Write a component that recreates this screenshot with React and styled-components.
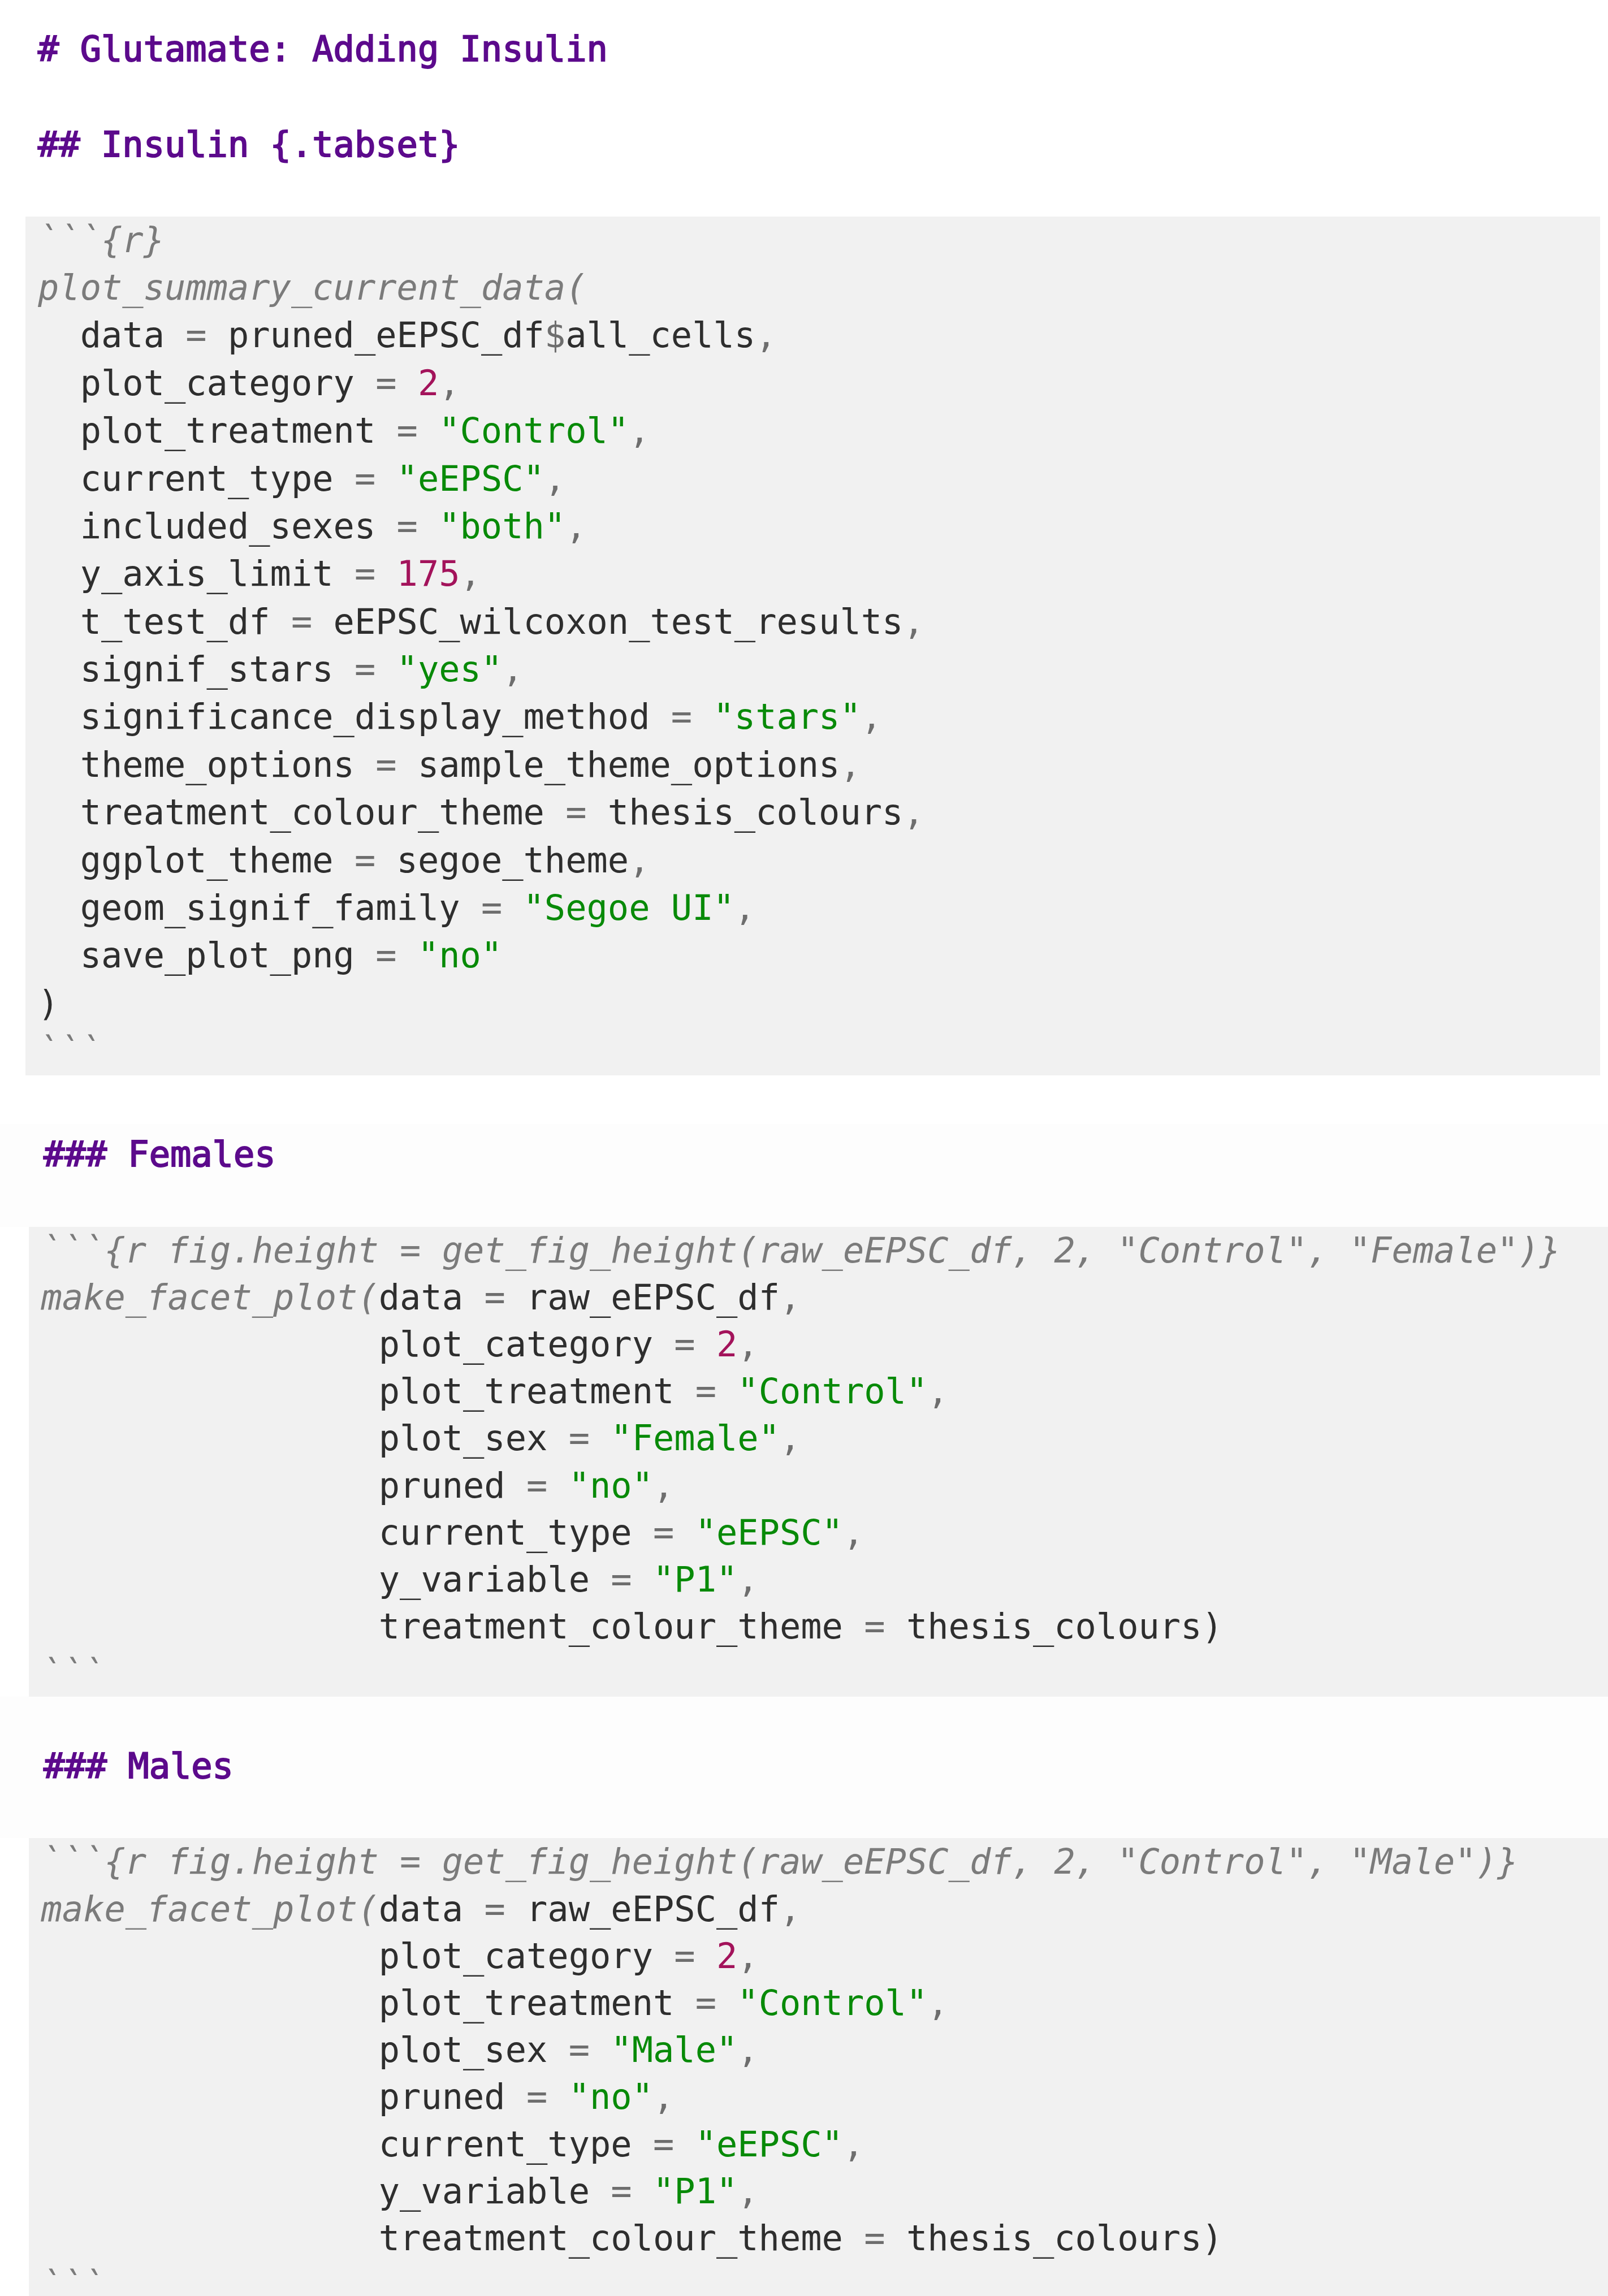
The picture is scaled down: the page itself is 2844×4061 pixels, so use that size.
import React from "react";
import styled, { createGlobalStyle } from "styled-components";

const Global = createGlobalStyle`
  html, body { margin: 0; padding: 0; background: #ffffff; }
  body { font-family: "DejaVu Sans Mono", "Liberation Mono", monospace; }
`;

const MONO = `"DejaVu Sans Mono", "Liberation Mono", monospace`;

const Page = styled.div`
  width: 2844px;
  height: 4061px;
  overflow: hidden;
  display: flex;
  flex-direction: column;
  background: #ffffff;
  font-family: ${MONO};
  font-size: 62px;
`;

const TopSection = styled.section`
  display: flex;
  flex-direction: column;
  padding-top: 45px;
`;

const Line = styled.div`
  white-space: pre;
  height: ${(p) => p.$lh}px;
  line-height: ${(p) => p.$lh}px;
  color: #2e2e2e;
`;

const Heading = styled(Line)`
  color: #5c0a8c;
  font-weight: 400;
  -webkit-text-stroke: 2px #5c0a8c;
  padding-left: ${(p) => p.$indent}px;
`;

const Band = styled.div`
  flex: none;
  display: flex;
  flex-direction: column;
  background: #fdfdfd;
  height: ${(p) => p.$h}px;
  padding-top: ${(p) => p.$pt}px;
  box-sizing: border-box;
`;

const Spacer = styled.div`
  height: ${(p) => p.$h}px;
  flex: none;
`;

const CodeBlock = styled.div`
  flex: none;
  display: flex;
  flex-direction: column;
  background: #f1f1f1;
  margin-left: ${(p) => p.$left}px;
  margin-right: ${(p) => p.$right}px;
  padding-left: ${(p) => p.$pad}px;
`;

const Chunk = styled.span`
  color: #7b7b7b;
  font-style: italic;
`;
const Op = styled.span`
  color: #6e6e6e;
`;
const Str = styled.span`
  color: #088a08;
`;
const Num = styled.span`
  color: #a3135b;
`;
const Txt = styled.span`
  color: #2e2e2e;
`;

const TOKEN = { c: Chunk, f: Chunk, o: Op, s: Str, n: Num, t: Txt };

const arg = (indent, name, value, type, last) => {
  const toks = [["t", " ".repeat(indent) + name + " "], ["o", "="], ["t", " "]];
  if (Array.isArray(value)) toks.push(...value);
  else toks.push([type, value]);
  if (last === ")") toks.push(["t", ")"]);
  else if (last !== "none") toks.push(["o", ","]);
  return toks;
};

const block1 = [
  [["c", "```{r}"]],
  [["f", "plot_summary_current_data("]],
  arg(2, "data", [["t", "pruned_eEPSC_df"], ["o", "$"], ["t", "all_cells"]]),
  arg(2, "plot_category", "2", "n"),
  arg(2, "plot_treatment", '"Control"', "s"),
  arg(2, "current_type", '"eEPSC"', "s"),
  arg(2, "included_sexes", '"both"', "s"),
  arg(2, "y_axis_limit", "175", "n"),
  arg(2, "t_test_df", "eEPSC_wilcoxon_test_results", "t"),
  arg(2, "signif_stars", '"yes"', "s"),
  arg(2, "significance_display_method", '"stars"', "s"),
  arg(2, "theme_options", "sample_theme_options", "t"),
  arg(2, "treatment_colour_theme", "thesis_colours", "t"),
  arg(2, "ggplot_theme", "segoe_theme", "t"),
  arg(2, "geom_signif_family", '"Segoe UI"', "s"),
  arg(2, "save_plot_png", '"no"', "s", "none"),
  [["t", ")"]],
  [["c", "```"]],
];

const facetBlock = (sex) => [
  [["c", `\`\`\`{r fig.height = get_fig_height(raw_eEPSC_df, 2, "Control", "${sex}")}`]],
  [["f", "make_facet_plot("], ["t", "data "], ["o", "="], ["t", " raw_eEPSC_df"], ["o", ","]],
  arg(16, "plot_category", "2", "n"),
  arg(16, "plot_treatment", '"Control"', "s"),
  arg(16, "plot_sex", `"${sex}"`, "s"),
  arg(16, "pruned", '"no"', "s"),
  arg(16, "current_type", '"eEPSC"', "s"),
  arg(16, "y_variable", '"P1"', "s"),
  arg(16, "treatment_colour_theme", "thesis_colours", "t", ")"),
  [["c", "```"]],
];

function Code({ lines, lh, left, right, pad }) {
  return (
    <CodeBlock $left={left} $right={right} $pad={pad}>
      {lines.map((toks, i) => (
        <Line key={i} $lh={lh}>
          {toks.map(([type, text], j) => {
            const T = TOKEN[type];
            return <T key={j}>{text}</T>;
          })}
        </Line>
      ))}
    </CodeBlock>
  );
}

export default function App() {
  return (
    <>
      <Global />
      <Page>
        <TopSection>
          <Heading $lh={84.4} $indent={67}># Glutamate: Adding Insulin</Heading>
          <Line $lh={84.4} />
          <Heading $lh={84.4} $indent={67}>## Insulin {"{"}.tabset{"}"}</Heading>
          <Line $lh={84.4} />
          <Code lines={block1} lh={84.4} left={45} right={14} pad={22} />
        </TopSection>
        <Spacer $h={86} />
        <Band $h={182} $pt={12}>
          <Heading $lh={83.2} $indent={77}>### Females</Heading>
        </Band>
        <Code lines={facetBlock("Female")} lh={83.2} left={51} right={0} pad={21.5} />
        <Band $h={250} $pt={81}>
          <Heading $lh={83.2} $indent={77}>### Males</Heading>
        </Band>
        <Code lines={facetBlock("Male")} lh={83.2} left={51} right={0} pad={21.5} />
      </Page>
    </>
  );
}
